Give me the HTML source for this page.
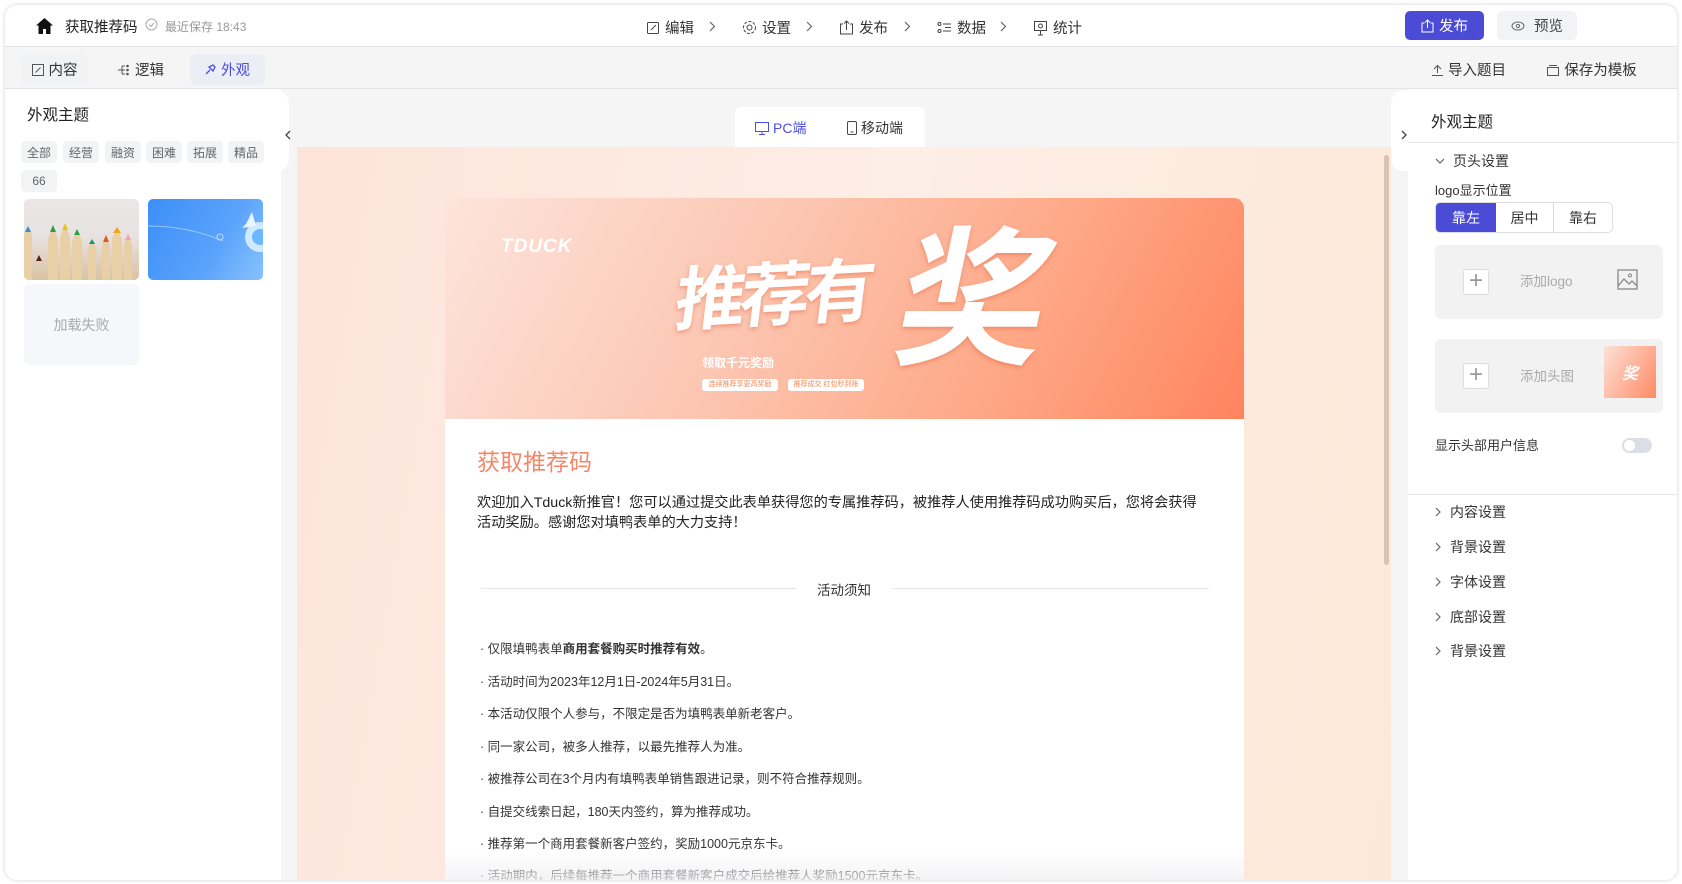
<!DOCTYPE html>
<html><head><meta charset="utf-8"><style>
*{box-sizing:border-box;margin:0;padding:0}
body{width:1682px;height:884px;background:#fff;font-family:"Liberation Sans","Noto Sans CJK SC",sans-serif;color:#222;position:relative;overflow:hidden}
.a{position:absolute}
.app{left:5px;top:5px;width:1672px;height:875px;border-radius:12px;background:#f5f5f6;box-shadow:0 0 4px rgba(0,0,0,.18);overflow:hidden}
.top{left:0;top:0;width:1672px;height:42px;background:#fff;border-bottom:1px solid #e6e6ea}
.nv{font-size:14.5px;color:#333;top:12px;display:flex;align-items:center;gap:5px}
.chev{top:16px}
.tab{top:49px;height:31px;border-radius:6px;font-size:14.5px;display:flex;align-items:center;justify-content:center;gap:5px;color:#333}
.tag{height:22px;width:36px;background:#f2f3f5;border-radius:4px;font-size:12px;color:#666;display:flex;align-items:center;justify-content:center;top:136px}
.li{left:475px;font-size:12.5px;color:#333}
.sec{left:1430px;font-size:14px;color:#333;display:flex;align-items:center;gap:8px}
</style></head><body>
<div class="a app">
 <div class="a top">
  <svg class="a" style="left:31px;top:13px" width="17" height="16" viewBox="0 0 17 16"><path d="M8.5 0L0 7.5h2.5V16h4.5v-5h3v5h4.5V7.5H17z" fill="#111"/></svg>
  <div class="a" style="left:60px;top:11px;font-size:14.5px;color:#222">获取推荐码</div>
  <svg class="a" style="left:140px;top:13px" width="13" height="13"><circle cx="6.5" cy="6.5" r="5.5" fill="none" stroke="#aaa"/><path d="M4 6.5l2 2 3-3.5" fill="none" stroke="#aaa"/></svg>
  <div class="a" style="left:160px;top:13px;font-size:12px;color:#999">最近保存 18:43</div>
  <div class="a nv" style="left:641px"><svg width="14" height="14"><rect x="1.5" y="1.5" width="11" height="11" fill="none" stroke="#444" rx="1"/><path d="M5 9l5-5" stroke="#444"/></svg>编辑</div>
  <svg class="a chev" style="left:704px" width="7" height="11"><path d="M1 1l4.5 4.5L1 10" fill="none" stroke="#666" stroke-width="1.2"/></svg>
  <div class="a nv" style="left:737px"><svg width="15" height="15"><circle cx="7.5" cy="7.5" r="6" fill="none" stroke="#444" stroke-dasharray="3 1.5"/><circle cx="7.5" cy="7.5" r="2.5" fill="none" stroke="#444"/></svg>设置</div>
  <svg class="a chev" style="left:801px" width="7" height="11"><path d="M1 1l4.5 4.5L1 10" fill="none" stroke="#666" stroke-width="1.2"/></svg>
  <div class="a nv" style="left:834px"><svg width="15" height="15"><path d="M4 4H1.5v10h12V4H11M7.5 10V1M5 3.5l2.5-2.5 2.5 2.5" fill="none" stroke="#444"/></svg>发布</div>
  <svg class="a chev" style="left:899px" width="7" height="11"><path d="M1 1l4.5 4.5L1 10" fill="none" stroke="#666" stroke-width="1.2"/></svg>
  <div class="a nv" style="left:932px"><svg width="15" height="15"><circle cx="2.5" cy="4" r="1.5" fill="none" stroke="#444"/><circle cx="2.5" cy="11" r="1.5" fill="none" stroke="#444"/><path d="M6 4h8M8 7.5h6M6 11h8" stroke="#444"/></svg>数据</div>
  <svg class="a chev" style="left:995px" width="7" height="11"><path d="M1 1l4.5 4.5L1 10" fill="none" stroke="#666" stroke-width="1.2"/></svg>
  <div class="a nv" style="left:1028px"><svg width="15" height="16"><rect x="1.5" y="1.5" width="12" height="9" fill="none" stroke="#444"/><circle cx="7.5" cy="6" r="2" fill="none" stroke="#444"/><path d="M7.5 10.5V15M5 15h5" stroke="#444"/></svg>统计</div>
  <div class="a" style="left:1400px;top:6px;width:79px;height:29px;background:#4b4bd6;border-radius:5px;color:#fff;font-size:14.5px;display:flex;align-items:center;justify-content:center;gap:5px"><svg width="13" height="14"><path d="M3.5 4H1v9h11V4H9.5M6.5 9V1M4 3.5l2.5-2.5 2.5 2.5" fill="none" stroke="#fff"/></svg>发布</div>
  <div class="a" style="left:1492px;top:6px;width:80px;height:29px;background:#f2f3f7;border-radius:5px;color:#444;font-size:14.5px;display:flex;align-items:center;justify-content:center;gap:9px"><svg width="14" height="10"><ellipse cx="7" cy="5" rx="6" ry="4" fill="none" stroke="#666"/><circle cx="7" cy="5" r="1.6" fill="none" stroke="#666"/></svg>预览</div>
 </div>
 <div class="a" style="left:0;top:83px;width:1672px;height:1px;background:#e4e4e8"></div>
 <div class="a tab" style="left:16px;width:67px;background:#f1f2f4"><svg width="12" height="12"><rect x=".5" y=".5" width="11" height="11" fill="none" stroke="#555"/><path d="M3.5 8.5l5-5" stroke="#555"/></svg>内容</div>
 <div class="a tab" style="left:100px;width:72px"><svg width="12" height="12"><path d="M0 6h4M4 2v8M4 2h3M4 6h3M4 10h3" fill="none" stroke="#555"/><circle cx="9.5" cy="2" r="1.3" fill="#555"/><circle cx="9.5" cy="6" r="1.3" fill="#555"/><circle cx="9.5" cy="10" r="1.3" fill="#555"/></svg>逻辑</div>
 <div class="a tab" style="left:185px;width:75px;background:#eceef5;color:#4b4ee0"><svg width="11" height="11"><path d="M1 10l4-4M4 3l4 4 2-4-2-2z" fill="none" stroke="#4b4ee0" stroke-width="1.3"/></svg>外观</div>
 <div class="a tab" style="left:1424px;width:80px"><svg width="11" height="12"><path d="M5.5 9V1.5M2 5l3.5-3.5L9 5M0 11.5h11" fill="none" stroke="#555"/></svg>导入题目</div>
 <div class="a tab" style="left:1539px;width:96px"><svg width="12" height="12"><rect x=".5" y="3.5" width="11" height="8" fill="none" stroke="#555"/><path d="M2 1.5h8" stroke="#555"/></svg>保存为模板</div>

 <div class="a" style="left:0;top:84px;width:276px;height:800px;background:#fff"></div>
 <div class="a" style="left:262px;top:86px;width:22px;height:80px;background:#fff;border-radius:0 12px 12px 0"></div>
 <svg class="a" style="left:280px;top:125px" width="6" height="10"><path d="M5 1L1 5l4 4" fill="none" stroke="#444" stroke-width="1.3"/></svg>
 <div class="a" style="left:22px;top:98px;font-size:15.5px;color:#222">外观主题</div>
 <div class="a tag" style="left:16px">全部</div><div class="a tag" style="left:58px">经营</div><div class="a tag" style="left:100px">融资</div><div class="a tag" style="left:141px">困难</div><div class="a tag" style="left:182px">拓展</div><div class="a tag" style="left:223px">精品</div>
 <div class="a tag" style="left:16px;top:165px">66</div>
 <div class="a" style="left:19px;top:194px;width:115px;height:81px;border-radius:5px;overflow:hidden;background:linear-gradient(#eae6e7 0%,#e8e3e2 45%,#d9c3a3 100%)">
  <svg width="115" height="81"><g fill="#e9cfa6"><path d="M0 35l4-8 4 8v46H0zM24 40l5-14 5 14v41H24zM36 38l5-14 5 14v43H36zM48 42l5-12 5 12v39H48zM64 50l4-10 4 10v31H64zM78 48l4-12 4 12v33H78zM88 40l5-12 5 12v41H88zM100 46l4-11 4 11v35h-8z"/></g><g><path d="M1 33l3-6 3 6z" fill="#3a8ed0"/><path d="M26 33l3-7 3 7z" fill="#2ea043"/><path d="M38 31l3-7 3 7z" fill="#e8c51a"/><path d="M50 36l3-6 3 6z" fill="#2ea043"/><path d="M65 45l3-5 3 5z" fill="#179a6a"/><path d="M79 43l3-7 3 7z" fill="#e05a1a"/><path d="M89 34l4-6 4 6z" fill="#f0a61a"/><path d="M101 41l3-6 3 6z" fill="#f4a1b5"/><path d="M12 62l3-6 3 6z" fill="#5a1f22"/></g></svg>
 </div>
 <div class="a" style="left:143px;top:194px;width:115px;height:81px;border-radius:5px;overflow:hidden;background:linear-gradient(120deg,#3c8ef8,#5aa3fb 60%,#88c2fd)">
  <svg width="115" height="81"><path d="M0 27q40 0 75 15" fill="none" stroke="#9cc8ff"/><circle cx="72" cy="38" r="3" fill="none" stroke="#bfe0ff"/><circle cx="112" cy="38" r="15" fill="#cfe9ff"/><circle cx="112" cy="38" r="8" fill="#6ab8ff"/><path d="M98 25l6-12 4 14-14 2z" fill="#eaf3ff"/></svg>
 </div>
 <div class="a" style="left:19px;top:279px;width:115px;height:81px;border-radius:5px;background:#f6f7fa;color:#aaa;font-size:14px;display:flex;align-items:center;justify-content:center">加载失败</div>

 <div class="a" style="left:730px;top:102px;width:190px;height:40px;background:#fff;border-radius:6px 6px 0 0"></div>
 <div class="a" style="left:750px;top:113px;font-size:14px;color:#4b4ee0;display:flex;gap:4px;align-items:center"><svg width="14" height="13"><rect x=".5" y=".5" width="13" height="9" fill="none" stroke="#4b4ee0"/><path d="M7 10v2.5M4 12.5h6" stroke="#4b4ee0"/></svg>PC端</div>
 <div class="a" style="left:842px;top:113px;font-size:14px;color:#333;display:flex;gap:4px;align-items:center"><svg width="10" height="14"><rect x=".5" y=".5" width="9" height="13" rx="1.5" fill="none" stroke="#444"/><path d="M3.5 11h3" stroke="#444"/></svg>移动端</div>
 <div class="a" style="left:292px;top:142px;width:1094px;height:740px;background:linear-gradient(100deg,#fde4da,#fdeee6 50%,#fde8d8)"></div>
 <div class="a" style="left:1379px;top:150px;width:5px;height:410px;background:#d8c3b4;border-radius:3px"></div>
 <div class="a" style="left:440px;top:193px;width:799px;height:700px;background:#fff;border-radius:10px;overflow:hidden">
  <div class="a" style="left:0;top:0;width:799px;height:221px;background:linear-gradient(118deg,#fde4dc 0%,#fcc5b0 40%,#fea887 70%,#ff845e 100%)">
   <div class="a" style="left:56px;top:38px;font-size:19px;font-weight:bold;font-style:italic;color:#fff;letter-spacing:1px">TDUCK</div>
   <div class="a" style="left:232px;top:42px;font-size:70px;font-weight:bold;color:#fff;letter-spacing:-6px;text-shadow:0 2px 4px rgba(230,100,60,.5);transform:skewX(-10deg) rotate(-3deg)">推荐有</div>
   <div class="a" style="left:455px;top:18px;font-size:150px;line-height:170px;font-weight:bold;color:#fff;text-shadow:0 2px 4px rgba(230,100,60,.5);transform:skewX(-12deg)">奖</div>
   <div class="a" style="left:257px;top:156px;font-size:12px;font-weight:bold;color:#fff">领取千元奖励</div>
   <div class="a" style="left:257px;top:181px;width:76px;height:12px;border-radius:3px;background:#fff;font-size:7px;color:#f08a5a;text-align:center;line-height:12px">连续推荐享更高奖励</div>
   <div class="a" style="left:343px;top:181px;width:76px;height:12px;border-radius:3px;background:#fff;font-size:7px;color:#f08a5a;text-align:center;line-height:12px">推荐成交 红包秒到账</div>
  </div>
  <div class="a" style="left:32px;top:245px;font-size:23px;color:#f4886a">获取推荐码</div>
  <div class="a" style="left:32px;top:295px;width:728px;font-size:14.2px;line-height:20px;color:#222">欢迎加入Tduck新推官！您可以通过提交此表单获得您的专属推荐码，被推荐人使用推荐码成功购买后，您将会获得活动奖励。感谢您对填鸭表单的大力支持！</div>
  <div class="a" style="left:36px;top:390px;width:315px;height:1px;background:#e6e6ec"></div>
  <div class="a" style="left:448px;top:390px;width:316px;height:1px;background:#e6e6ec"></div>
  <div class="a" style="left:372px;top:381px;font-size:13.5px;color:#333">活动须知</div>
 </div>
 <div class="a li" style="top:633px">· 仅限填鸭表单<b>商用套餐购买时推荐有效</b>。</div>
 <div class="a li" style="top:666px">· 活动时间为2023年12月1日-2024年5月31日。</div>
 <div class="a li" style="top:698px">· 本活动仅限个人参与，不限定是否为填鸭表单新老客户。</div>
 <div class="a li" style="top:731px">· 同一家公司，被多人推荐，以最先推荐人为准。</div>
 <div class="a li" style="top:763px">· 被推荐公司在3个月内有填鸭表单销售跟进记录，则不符合推荐规则。</div>
 <div class="a li" style="top:796px">· 自提交线索日起，180天内签约，算为推荐成功。</div>
 <div class="a li" style="top:828px">· 推荐第一个商用套餐新客户签约，奖励1000元京东卡。</div>
 <div class="a li" style="top:860px">· 活动期内，后续每推荐一个商用套餐新客户成交后给推荐人奖励1500元京东卡。</div>
 <div class="a" style="left:440px;top:845px;width:799px;height:35px;background:linear-gradient(rgba(245,245,246,0),rgba(240,240,242,.9))"></div>

 <div class="a" style="left:1386px;top:86px;width:25px;height:80px;background:#fff;border-radius:12px 0 0 12px"></div>
 <svg class="a" style="left:1396px;top:125px" width="6" height="10"><path d="M1 1l4 4-4 4" fill="none" stroke="#444" stroke-width="1.3"/></svg>
 <div class="a" style="left:1403px;top:84px;width:269px;height:800px;background:#fff"></div>
 <div class="a" style="left:1426px;top:105px;font-size:15.5px;color:#222">外观主题</div>
 <div class="a" style="left:1403px;top:137px;width:269px;height:1px;background:#e6e6ec"></div>
 <div class="a sec" style="top:146px"><svg width="10" height="7"><path d="M1 1l4 4 4-4" fill="none" stroke="#666" stroke-width="1.2"/></svg>页头设置</div>
 <div class="a" style="left:1430px;top:175px;font-size:13px;color:#333">logo显示位置</div>
 <div class="a" style="left:1430px;top:197px;width:178px;height:31px;border:1px solid #dcdde3;border-radius:5px;display:flex;font-size:14px;overflow:hidden">
  <div style="width:60px;background:#4b4bd6;color:#fff;display:flex;align-items:center;justify-content:center">靠左</div>
  <div style="width:58px;border-right:1px solid #dcdde3;display:flex;align-items:center;justify-content:center;color:#333">居中</div>
  <div style="flex:1;display:flex;align-items:center;justify-content:center;color:#333">靠右</div>
 </div>
 <div class="a" style="left:1430px;top:240px;width:228px;height:74px;background:#f2f2f3;border-radius:6px"></div>
 <div class="a" style="left:1458px;top:264px;width:26px;height:26px;background:#fff;border:1px solid #ddd;border-radius:3px;font-size:24px;line-height:22px;text-align:center;color:#999;font-weight:300">+</div>
 <div class="a" style="left:1515px;top:265px;font-size:13.5px;color:#aaa">添加logo</div>
 <svg class="a" style="left:1612px;top:264px" width="21" height="21"><rect x="1" y="1" width="19" height="19" fill="none" stroke="#888" stroke-width="1.3"/><circle cx="13" cy="6.5" r="1.5" fill="none" stroke="#888"/><path d="M1 17l6-7 5 5 3-3 5 5" fill="none" stroke="#888" stroke-width="1.3"/></svg>
 <div class="a" style="left:1430px;top:334px;width:228px;height:74px;background:#f2f2f3;border-radius:6px"></div>
 <div class="a" style="left:1458px;top:358px;width:26px;height:26px;background:#fff;border:1px solid #ddd;border-radius:3px;font-size:24px;line-height:22px;text-align:center;color:#999;font-weight:300">+</div>
 <div class="a" style="left:1515px;top:360px;font-size:13.5px;color:#aaa">添加头图</div>
 <div class="a" style="left:1599px;top:341px;width:52px;height:52px;background:linear-gradient(120deg,#fde1d6,#ff8a65);color:#fff;font-size:16px;font-weight:bold;font-style:italic;display:flex;align-items:center;justify-content:center;overflow:hidden">奖</div>
 <div class="a" style="left:1430px;top:430px;font-size:13px;color:#333">显示头部用户信息</div>
 <div class="a" style="left:1617px;top:433px;width:30px;height:15px;background:#dcdee5;border-radius:8px"><div style="margin:2px;width:11px;height:11px;background:#fff;border-radius:50%"></div></div>
 <div class="a" style="left:1403px;top:489px;width:269px;height:1px;background:#e6e6ec"></div>
 <div class="a sec" style="top:497px"><svg width="7" height="10"><path d="M1 1l4 4-4 4" fill="none" stroke="#666" stroke-width="1.2"/></svg>内容设置</div>
 <div class="a sec" style="top:532px"><svg width="7" height="10"><path d="M1 1l4 4-4 4" fill="none" stroke="#666" stroke-width="1.2"/></svg>背景设置</div>
 <div class="a sec" style="top:567px"><svg width="7" height="10"><path d="M1 1l4 4-4 4" fill="none" stroke="#666" stroke-width="1.2"/></svg>字体设置</div>
 <div class="a sec" style="top:602px"><svg width="7" height="10"><path d="M1 1l4 4-4 4" fill="none" stroke="#666" stroke-width="1.2"/></svg>底部设置</div>
 <div class="a sec" style="top:636px"><svg width="7" height="10"><path d="M1 1l4 4-4 4" fill="none" stroke="#666" stroke-width="1.2"/></svg>背景设置</div>
</div>
</body></html>
